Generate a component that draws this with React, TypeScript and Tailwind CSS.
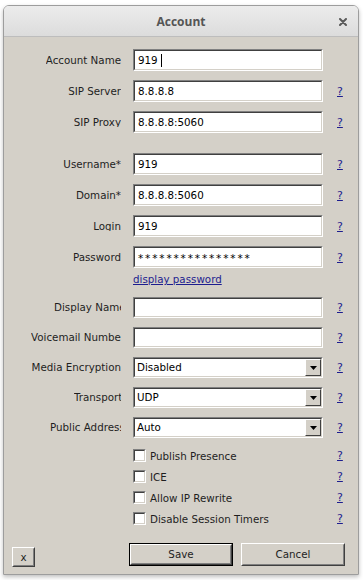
import React from "react";

const Sunken = ({ className = "", children }: { className?: string; children?: React.ReactNode }) => (
  <div className={"border border-t-[#808080] border-l-[#808080] border-b-white border-r-white " + className}>
    <div className="w-full h-full border border-t-[#404040] border-l-[#404040] border-b-[#d4d0c8] border-r-[#d4d0c8] bg-white flex items-center overflow-hidden">
      {children}
    </div>
  </div>
);

const Help = () => (
  <span className="ml-[14px] text-[#1d1d8f] underline text-[11px] leading-none">?</span>
);

const Label = ({ text, w }: { text: string; w?: string }) => (
  <div className="w-[117px] flex justify-end shrink-0">
    <span className={"whitespace-nowrap overflow-hidden text-[#1e1e1e] " + (w ?? "")}>{text}</span>
  </div>
);

const TextRow = ({ label, value, w, h = "h-[22px]", help = true, mt = "" }: { label: string; value?: string; w?: string; h?: string; help?: boolean; mt?: string }) => (
  <div className={"flex items-center " + h + " " + mt}>
    <Label text={label} w={w} />
    <Sunken className={"ml-[12px] w-[190px] " + h}>
      <span className="pl-[3px] text-black whitespace-nowrap">{value}</span>
    </Sunken>
    {help ? <Help /> : null}
  </div>
);

const SelectRow = ({ label, value, w, mt = "" }: { label: string; value: string; w?: string; mt?: string }) => (
  <div className={"flex items-center h-[21px] " + mt}>
    <Label text={label} w={w} />
    <Sunken className="ml-[12px] w-[190px] h-[21px]">
      <span className="pl-[2px] text-black flex-1 whitespace-nowrap">{value}</span>
      <div className="h-full w-[16px] border border-t-white border-l-white border-b-[#404040] border-r-[#404040] bg-[#d4d0c8] flex items-center justify-center">
        <svg width="7" height="4" viewBox="0 0 7 4"><path d="M0 0h7L3.5 4z" fill="#000" /></svg>
      </div>
    </Sunken>
    <Help />
  </div>
);

const CheckRow = ({ label }: { label: string }) => (
  <div className="flex items-center h-[21px]">
    <div className="w-[129px] shrink-0" />
    <div className="w-[13px] h-[13px] border border-t-[#808080] border-l-[#808080] border-b-white border-r-white">
      <div className="w-full h-full border border-t-[#404040] border-l-[#404040] border-b-[#d4d0c8] border-r-[#d4d0c8] bg-white" />
    </div>
    <span className="ml-[4px] w-[173px] whitespace-nowrap text-[#1e1e1e] pt-[1px]">{label}</span>
    <Help />
  </div>
);

const Button = ({ children, def = false, className = "" }: { children: React.ReactNode; def?: boolean; className?: string }) => (
  <div className={(def ? "border border-black " : "") + className}>
    <div className="w-full h-full border border-t-white border-l-white border-b-[#404040] border-r-[#404040]">
      <div className="w-full h-full border border-t-[#d4d0c8] border-l-[#d4d0c8] border-b-[#808080] border-r-[#808080] bg-[#d4d0c8] flex items-center justify-center text-[#1e1e1e]">
        {children}
      </div>
    </div>
  </div>
);

export default function App() {
  return (
    <div className="w-[363px] h-[580px] bg-white pt-[5px] pl-[3px] overflow-hidden" style={{ fontFamily: "'DejaVu Sans', sans-serif" }}>
      <div className="w-[356px] h-[570px] rounded-t-[6px] border border-[#9d9d9d] flex flex-col overflow-hidden shadow-[0_2px_4px_rgba(0,0,0,0.25)]">
        <div className="h-[31px] shrink-0 bg-gradient-to-b from-[#ececec] to-[#dcdcdc] border-b border-[#bdbdbd] relative flex items-center justify-center pt-[2px]">
          <span className="text-[12px] font-bold text-[#555]" style={{ fontFamily: "'Open Sans', sans-serif" }}>Account</span>
          <svg className="absolute right-[11px] top-[12px]" width="8" height="8" viewBox="0 0 8 8">
            <path d="M1 1L7 7M7 1L1 7" stroke="#5a5a5a" strokeWidth="2" strokeLinecap="round" />
          </svg>
        </div>
        <div className="flex-1 bg-[#d4d0c8] text-[10.3px] leading-none flex flex-col pt-[12px]">
          <div className="flex flex-col gap-[9px]">
            <div className="flex items-center h-[22px]">
              <Label text="Account Name" />
              <Sunken className="ml-[12px] w-[190px] h-[22px]">
                <span className="pl-[3px] text-black">919</span>
                <span className="ml-[3px] w-px h-[13px] bg-black" />
              </Sunken>
            </div>
            <TextRow label="SIP Server" value="8.8.8.8" />
            <TextRow label="SIP Proxy" value="8.8.8.8:5060" />
          </div>
          <div className="flex flex-col gap-[9px] mt-[20px]">
            <TextRow label="Username*" value="919" />
            <TextRow label="Domain*" value="8.8.8.8:5060" />
            <TextRow label="Login" value="919" />
            <div className="flex items-center h-[22px]">
              <Label text="Password" />
              <Sunken className="ml-[12px] w-[190px] h-[22px]">
                <span className="pl-[3px] text-black tracking-[1.85px] pt-[3px] text-[10.5px]">****************</span>
              </Sunken>
              <Help />
            </div>
          </div>
          <div className="h-[14px] mt-[4px] flex items-center">
            <span className="ml-[129px] text-[#1d1d8f] underline">display password</span>
          </div>
          <div className="flex flex-col gap-[9px] mt-[11px]">
            <TextRow label="Display Name" w="w-[67px]" h="h-[21px]" />
            <TextRow label="Voicemail Number" w="w-[90px]" h="h-[21px]" />
            <SelectRow label="Media Encryption" value="Disabled" />
            <SelectRow label="Transport" value="UDP" w="w-[47px]" />
            <SelectRow label="Public Address" value="Auto" w="w-[71px]" />
          </div>
          <div className="flex flex-col mt-[7px]">
            <CheckRow label="Publish Presence" />
            <CheckRow label="ICE" />
            <CheckRow label="Allow IP Rewrite" />
            <CheckRow label="Disable Session Timers" />
          </div>
          <div className="flex items-start mt-[14px]">
            <Button className="ml-[8px] mt-[4px] w-[23px] h-[20px]">x</Button>
            <Button def className="ml-[94px] w-[104px] h-[23px]">Save</Button>
            <Button className="ml-[8px] w-[104px] h-[23px]">Cancel</Button>
          </div>
        </div>
      </div>
    </div>
  );
}
